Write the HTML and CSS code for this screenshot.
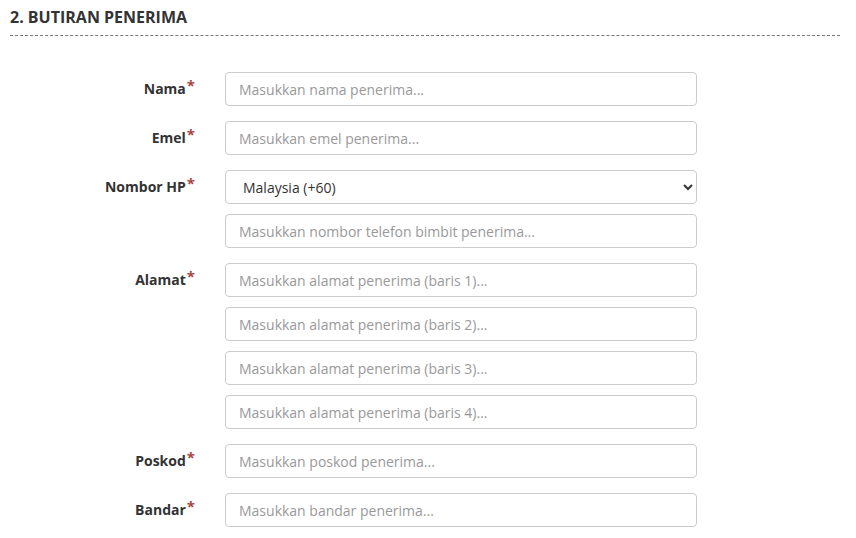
FILE: index.html
```
<!DOCTYPE html>
<html>
  <head>
    <meta charset="utf-8">
    <title>Butiran Penerima</title>
    <link rel="stylesheet" href="styles.css">
  </head>
  <body>
    <div class="section">
      <h2 class="section-title">2. BUTIRAN PENERIMA</h2>

      <div class="form">
        <div class="form-row">
          <label class="form-label">Nama<span class="req">*</span></label>
          <div class="form-fields">
            <input type="text" placeholder="Masukkan nama penerima...">
          </div>
        </div>
        <div class="form-row">
          <label class="form-label">Emel<span class="req">*</span></label>
          <div class="form-fields">
            <input type="text" placeholder="Masukkan emel penerima...">
          </div>
        </div>
        <div class="form-row">
          <label class="form-label">Nombor HP<span class="req">*</span></label>
          <div class="form-fields">
            <select>
              <option>Malaysia (+60)</option>
            </select>
            <input type="text" placeholder="Masukkan nombor telefon bimbit penerima...">
          </div>
        </div>
        <div class="form-row">
          <label class="form-label">Alamat<span class="req">*</span></label>
          <div class="form-fields">
            <input type="text" placeholder="Masukkan alamat penerima (baris 1)...">
            <input type="text" placeholder="Masukkan alamat penerima (baris 2)...">
            <input type="text" placeholder="Masukkan alamat penerima (baris 3)...">
            <input type="text" placeholder="Masukkan alamat penerima (baris 4)...">
          </div>
        </div>
        <div class="form-row">
          <label class="form-label">Poskod<span class="req">*</span></label>
          <div class="form-fields">
            <input type="text" placeholder="Masukkan poskod penerima...">
          </div>
        </div>
        <div class="form-row">
          <label class="form-label">Bandar<span class="req">*</span></label>
          <div class="form-fields">
            <input type="text" placeholder="Masukkan bandar penerima...">
          </div>
        </div>
      </div>
    </div>
  </body>
</html>
```

FILE: styles.css
```
body, html {
  margin: 0;
}

body {
  background-color: #fff;
  color: #333;
  font-family: "Open Sans", sans-serif;
  font-size: 14px;
}

.section {
  padding: 6px 16px 0 10px;
}

.section-title {
  margin: 0;
  padding-bottom: 7px;
  font-size: 16px;
  font-weight: 700;
  color: #333;
  border-bottom: 1px dashed #777;
}

.form {
  margin-top: 36px;
  display: flex;
  flex-direction: column;
  gap: 15px;
}

.form-row {
  display: flex;
  gap: 30px;
}

.form-label {
  box-sizing: border-box;
  width: 185px;
  height: 34px;
  padding-bottom: 2px;
  display: flex;
  align-items: center;
  justify-content: flex-end;
  font-weight: 700;
  color: #333;
}

.req {
  color: #a94442;
  align-self: flex-start;
  margin-top: 3px;
  margin-left: 1px;
  font-size: 15px;
  font-weight: 700;
}

.form-fields {
  width: 472px;
  display: flex;
  flex-direction: column;
  gap: 10px;
}

input, select {
  box-sizing: border-box;
  width: 100%;
  height: 34px;
  padding: 6px 13px;
  border: 1px solid #ccc;
  border-radius: 4px;
  background-color: #fff;
  color: #333;
  font-family: "Open Sans", sans-serif;
  font-size: 14px;
}

input::placeholder {
  color: #999;
}

select {
  padding-left: 13px;
}
```
